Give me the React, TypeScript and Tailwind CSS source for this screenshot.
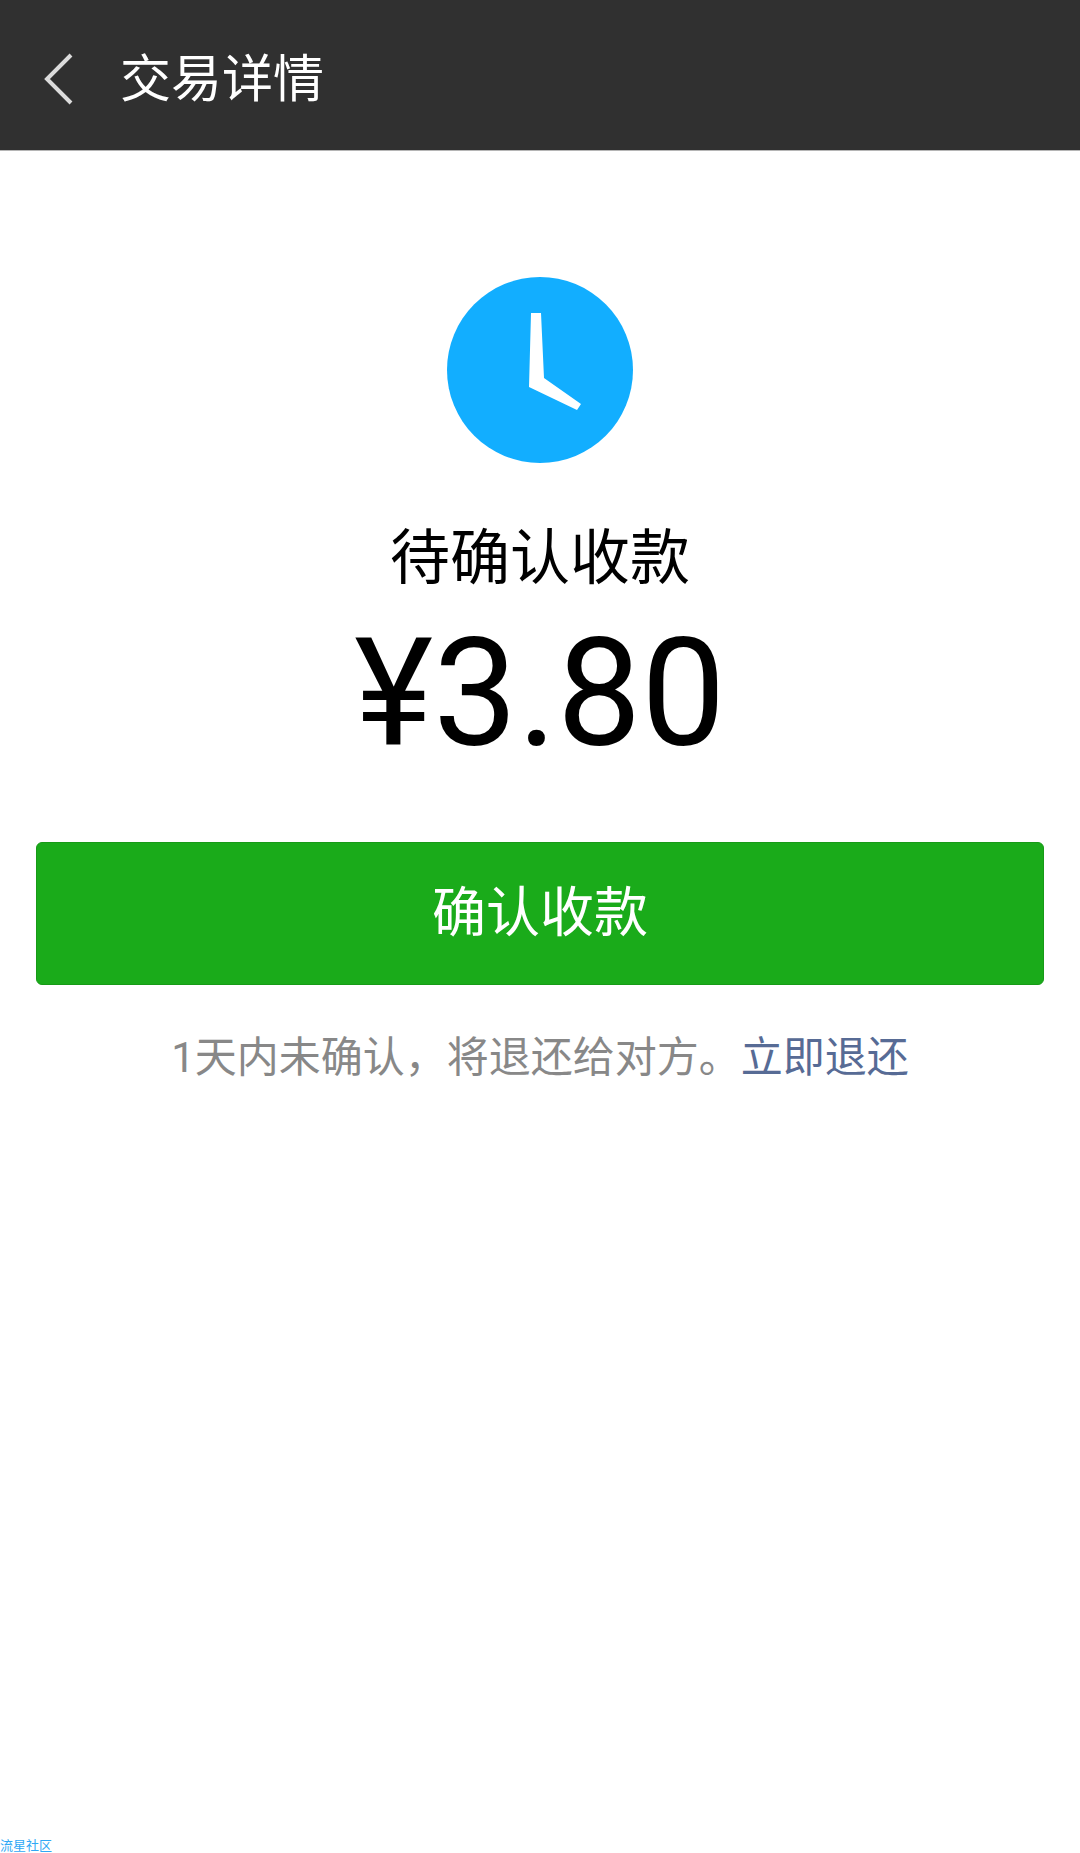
const cjk = "font-['Roboto','Noto_Sans_CJK_SC',sans-serif]";

function ClockIcon() {
  return (
    <svg width="186" height="186" viewBox="0 0 186 186" className="block">
      <circle cx="93" cy="93" r="93" fill="#12aeff" />
      <path d="M84 36 L94 36 L97 101 L134 127 L130 133 L82 110 Z" fill="#fff" />
    </svg>
  );
}

export default function App() {
  return (
    <div className={`flex h-[1853px] w-[1080px] flex-col bg-white ${cjk}`}>
      <header className="flex h-[151px] items-center border-b border-[#b5b5b5] bg-[#303030] pt-[7px]">
        <svg width="32" height="52" viewBox="0 0 32 52" className="ml-[43px]">
          <path d="M28 2 L4 26 L28 50" fill="none" stroke="#dcdcdc" strokeWidth="4" />
        </svg>
        <h1 className="ml-[45px] mt-[2px] text-[51px] leading-none text-white">交易详情</h1>
      </header>

      <main className="flex flex-1 flex-col items-center pt-[126px]">
        <ClockIcon />
        <p className="mt-[58px] text-[60px] leading-[76px] text-black">待确认收款</p>
        <p className="mt-[22px] text-[150px] leading-[150px] text-black">¥3.80</p>
        <button className="mt-[73px] h-[143px] w-[1008px] rounded-[6px] border border-[#179a17] bg-[#1aab1a] text-[54px] text-white">
          确认收款
        </button>
        <p className="mt-[47px] text-[42px] leading-[52px] text-[#888888]">
          1天内未确认，将退还给对方。<span className="text-[#576b95]">立即退还</span>
        </p>
      </main>

      <footer className="h-[14px] overflow-hidden text-[13px] leading-[14px] text-[#30a8f5]">流星社区</footer>
    </div>
  );
}
